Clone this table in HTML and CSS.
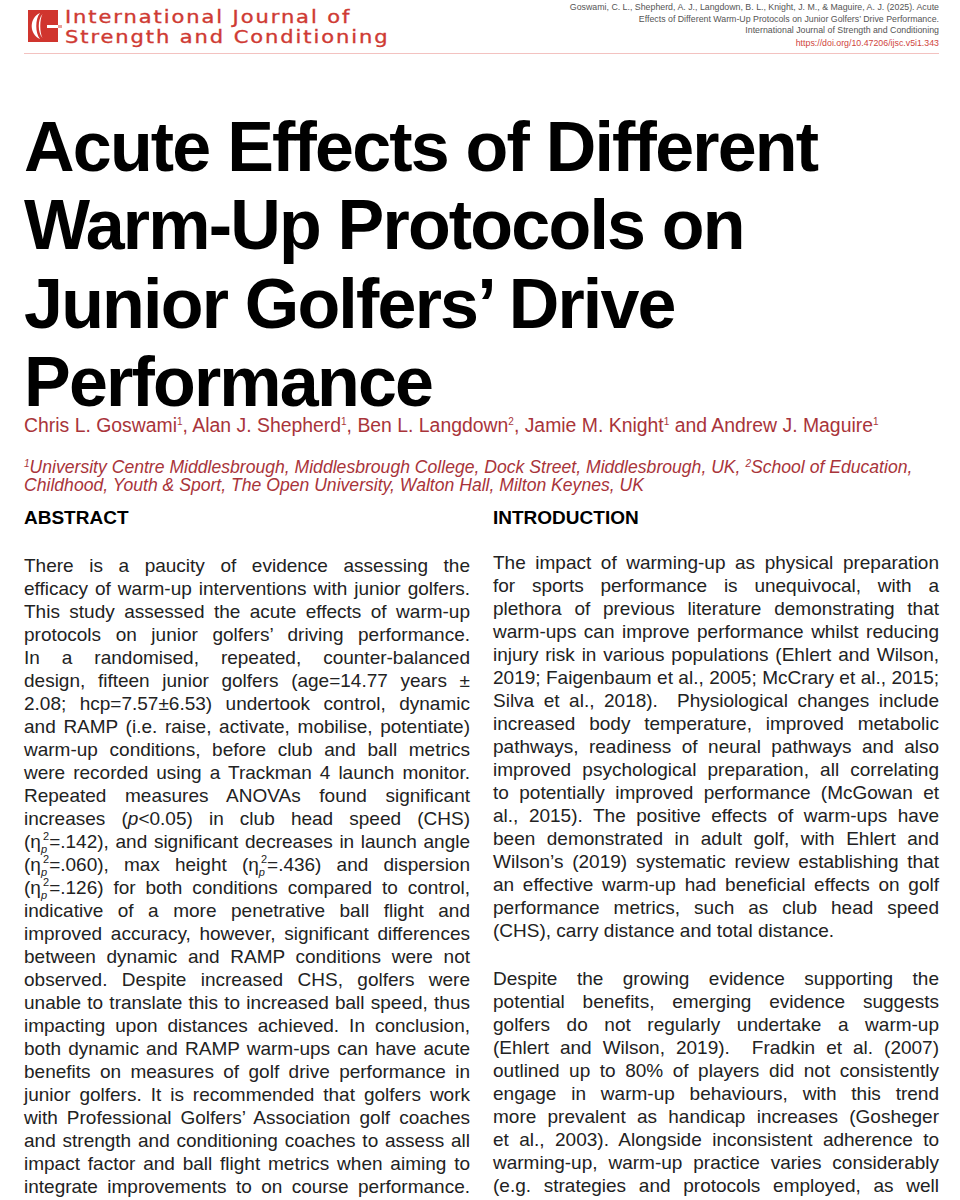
FILE: index.html
```html
<!DOCTYPE html>
<html lang="en">
<head>
<meta charset="utf-8">
<title>Acute Effects of Different Warm-Up Protocols on Junior Golfers’ Drive Performance</title>
<link rel="stylesheet" href="styles.css">
</head>
<body>
<div class="page">
  <header class="masthead">
    <div class="brand">
      <svg class="logo" viewBox="0 0 34 32" aria-hidden="true">
        <rect x="0" y="0" width="30" height="32" fill="#d0352e"/>
        <path d="M12 3 C1 8 1 24 12 29 C7 23 7 9 12 3 Z" fill="#fff"/>
        <path d="M14.5 4 C9.5 9 9.5 23 14.5 28 C11.5 23 11.5 9 14.5 4 Z" fill="#fff"/>
        <rect x="19" y="15" width="11" height="3" fill="#fff"/>
        <rect x="30" y="15" width="4" height="3" fill="#e9a09b"/>
      </svg>
      <div class="brand-name"><span class="brand-line">International Journal of</span><span class="brand-line">Strength and Conditioning</span></div>
    </div>
    <div class="cite">
      <div>Goswami, C. L., Shepherd, A. J., Langdown, B. L., Knight, J. M., &amp; Maguire, A. J. (2025). Acute</div>
      <div>Effects of Different Warm-Up Protocols on Junior Golfers’ Drive Performance.</div>
      <div>International Journal of Strength and Conditioning</div>
      <div class="doi">https://doi.org/10.47206/ijsc.v5i1.343</div>
    </div>
  </header>

  <h1 class="title">Acute Effects of Different<br>Warm-Up Protocols on<br>Junior Golfers’ Drive<br>Performance</h1>

  <p class="authors">Chris L. Goswami<span class="r">1</span>, Alan J. Shepherd<span class="r">1</span>, Ben L. Langdown<span class="r">2</span>, Jamie M. Knight<span class="r">1</span> and Andrew J. Maguire<span class="r">1</span></p>

  <p class="affil"><span class="r">1</span>University Centre Middlesbrough, Middlesbrough College, Dock Street, Middlesbrough, UK, <span class="r">2</span>School of Education,<br>Childhood, Youth &amp; Sport, The Open University, Walton Hall, Milton Keynes, UK</p>

  <div class="columns">
    <section class="col">
      <h2 class="head">ABSTRACT</h2>
      <div class="text abstract">
        <p>
          <span class="l">There is a paucity of evidence assessing the</span>
          <span class="l">efficacy of warm-up interventions with junior golfers.</span>
          <span class="l">This study assessed the acute effects of warm-up</span>
          <span class="l">protocols on junior golfers’ driving performance.</span>
          <span class="l">In a randomised, repeated, counter-balanced</span>
          <span class="l">design, fifteen junior golfers (age=14.77 years ±</span>
          <span class="l">2.08; hcp=7.57±6.53) undertook control, dynamic</span>
          <span class="l">and RAMP (i.e. raise, activate, mobilise, potentiate)</span>
          <span class="l">warm-up conditions, before club and ball metrics</span>
          <span class="l">were recorded using a Trackman 4 launch monitor.</span>
          <span class="l">Repeated measures ANOVAs found significant</span>
          <span class="l">increases (<i>p</i>&lt;0.05) in club head speed (CHS)</span>
          <span class="l">(η<span class="sb">p</span><span class="sp">2</span>=.142), and significant decreases in launch angle</span>
          <span class="l">(η<span class="sb">p</span><span class="sp">2</span>=.060), max height (η<span class="sb">p</span><span class="sp">2</span>=.436) and dispersion</span>
          <span class="l">(η<span class="sb">p</span><span class="sp">2</span>=.126) for both conditions compared to control,</span>
          <span class="l">indicative of a more penetrative ball flight and</span>
          <span class="l">improved accuracy, however, significant differences</span>
          <span class="l">between dynamic and RAMP conditions were not</span>
          <span class="l">observed. Despite increased CHS, golfers were</span>
          <span class="l">unable to translate this to increased ball speed, thus</span>
          <span class="l">impacting upon distances achieved. In conclusion,</span>
          <span class="l">both dynamic and RAMP warm-ups can have acute</span>
          <span class="l">benefits on measures of golf drive performance in</span>
          <span class="l">junior golfers. It is recommended that golfers work</span>
          <span class="l">with Professional Golfers’ Association golf coaches</span>
          <span class="l">and strength and conditioning coaches to assess all</span>
          <span class="l">impact factor and ball flight metrics when aiming to</span>
          <span class="l">integrate improvements to on course performance.</span>
        </p>
      </div>
    </section>

    <section class="col">
      <h2 class="head">INTRODUCTION</h2>
      <div class="text intro">
        <p>
          <span class="l">The impact of warming-up as physical preparation</span>
          <span class="l">for sports performance is unequivocal, with a</span>
          <span class="l">plethora of previous literature demonstrating that</span>
          <span class="l">warm-ups can improve performance whilst reducing</span>
          <span class="l">injury risk in various populations (Ehlert and Wilson,</span>
          <span class="l">2019; Faigenbaum et al., 2005; McCrary et al., 2015;</span>
          <span class="l">Silva et al., 2018).&nbsp; Physiological changes include</span>
          <span class="l">increased body temperature, improved metabolic</span>
          <span class="l">pathways, readiness of neural pathways and also</span>
          <span class="l">improved psychological preparation, all correlating</span>
          <span class="l">to potentially improved performance (McGowan et</span>
          <span class="l">al., 2015). The positive effects of warm-ups have</span>
          <span class="l">been demonstrated in adult golf, with Ehlert and</span>
          <span class="l">Wilson’s (2019) systematic review establishing that</span>
          <span class="l">an effective warm-up had beneficial effects on golf</span>
          <span class="l">performance metrics, such as club head speed</span>
          <span class="l end">(CHS), carry distance and total distance.</span>
        </p>
        <p>
          <span class="l">Despite the growing evidence supporting the</span>
          <span class="l">potential benefits, emerging evidence suggests</span>
          <span class="l">golfers do not regularly undertake a warm-up</span>
          <span class="l">(Ehlert and Wilson, 2019).&nbsp; Fradkin et al. (2007)</span>
          <span class="l">outlined up to 80% of players did not consistently</span>
          <span class="l">engage in warm-up behaviours, with this trend</span>
          <span class="l">more prevalent as handicap increases (Gosheger</span>
          <span class="l">et al., 2003). Alongside inconsistent adherence to</span>
          <span class="l">warming-up, warm-up practice varies considerably</span>
          <span class="l">(e.g. strategies and protocols employed, as well</span>
        </p>
      </div>
    </section>
  </div>
</div>
</body>
</html>
```

FILE: styles.css
```css
* {
  box-sizing: border-box;
}

html,
body {
  margin: 0;
  padding: 0;
  background: #ffffff;
}

body {
  font-family: "Liberation Sans", Arial, Helvetica, sans-serif;
  color: #1e1e1e;
}

.page {
  width: 960px;
  height: 1200px;
  padding: 0 21px 0 24px;
  overflow: hidden;
}

/* ---------- masthead ---------- */
.masthead {
  display: flex;
  justify-content: space-between;
  align-items: flex-start;
  height: 54px;
  border-bottom: 1px solid #f3c2c0;
}

.brand {
  display: flex;
  align-items: flex-start;
  gap: 3px;
}

.logo {
  flex: none;
  width: 34px;
  height: 32px;
  margin: 10px 0 0 4px;
}

.brand-name {
  margin-top: 7px;
  font-family: "DejaVu Sans", "Liberation Sans", sans-serif;
  font-size: 17.5px;
  line-height: 20px;
  letter-spacing: 1.6px;
  color: #cf3a33;
  -webkit-text-stroke: 0.35px #cf3a33;
  white-space: nowrap;
  transform: scaleX(1.2);
  transform-origin: left top;
}

.brand-line {
  display: block;
}

.cite {
  padding-top: 2px;
  font-size: 8.8px;
  line-height: 11.5px;
  color: #555555;
  text-align: right;
  white-space: nowrap;
}

.cite .doi {
  margin-top: 1.5px;
  color: #d0453d;
}

/* ---------- title block ---------- */
.title {
  margin: 53.5px 0 -7.5px;
  font-size: 70px;
  line-height: 78.5px;
  font-weight: 700;
  letter-spacing: -1.8px;
  color: #000000;
}

.authors {
  margin: 0;
  font-size: 19.4px;
  line-height: 23px;
  color: #a9343a;
  white-space: nowrap;
}

.affil {
  margin: 21px 0 0;
  font-size: 17.6px;
  line-height: 18px;
  font-style: italic;
  color: #a9343a;
  white-space: nowrap;
}

.r {
  font-size: 10px;
  line-height: 0;
  vertical-align: 7px;
  font-style: normal;
}

.affil .r {
  font-style: italic;
  vertical-align: 6px;
}

/* ---------- columns ---------- */
.columns {
  display: grid;
  grid-template-columns: 446px 446px;
  column-gap: 23px;
  margin-top: 12px;
}

.head {
  margin: 0;
  font-size: 19px;
  line-height: 23px;
  font-weight: 700;
  color: #000000;
}

.text {
  font-size: 19px;
  line-height: 23px;
  color: #222222;
}

.text p {
  margin: 0;
}

.text p + p {
  margin-top: 25px;
}

.abstract {
  margin-top: 25px;
}

.intro {
  margin-top: 22px;
}

.l {
  display: block;
  text-align: justify;
  text-align-last: justify;
}

.l.end {
  text-align-last: left;
}

.sb,
.sp {
  font-size: 11px;
  line-height: 0;
}

.sb {
  font-style: italic;
  vertical-align: -5px;
}

.sp {
  vertical-align: 8px;
  margin-left: -4px;
}
```
